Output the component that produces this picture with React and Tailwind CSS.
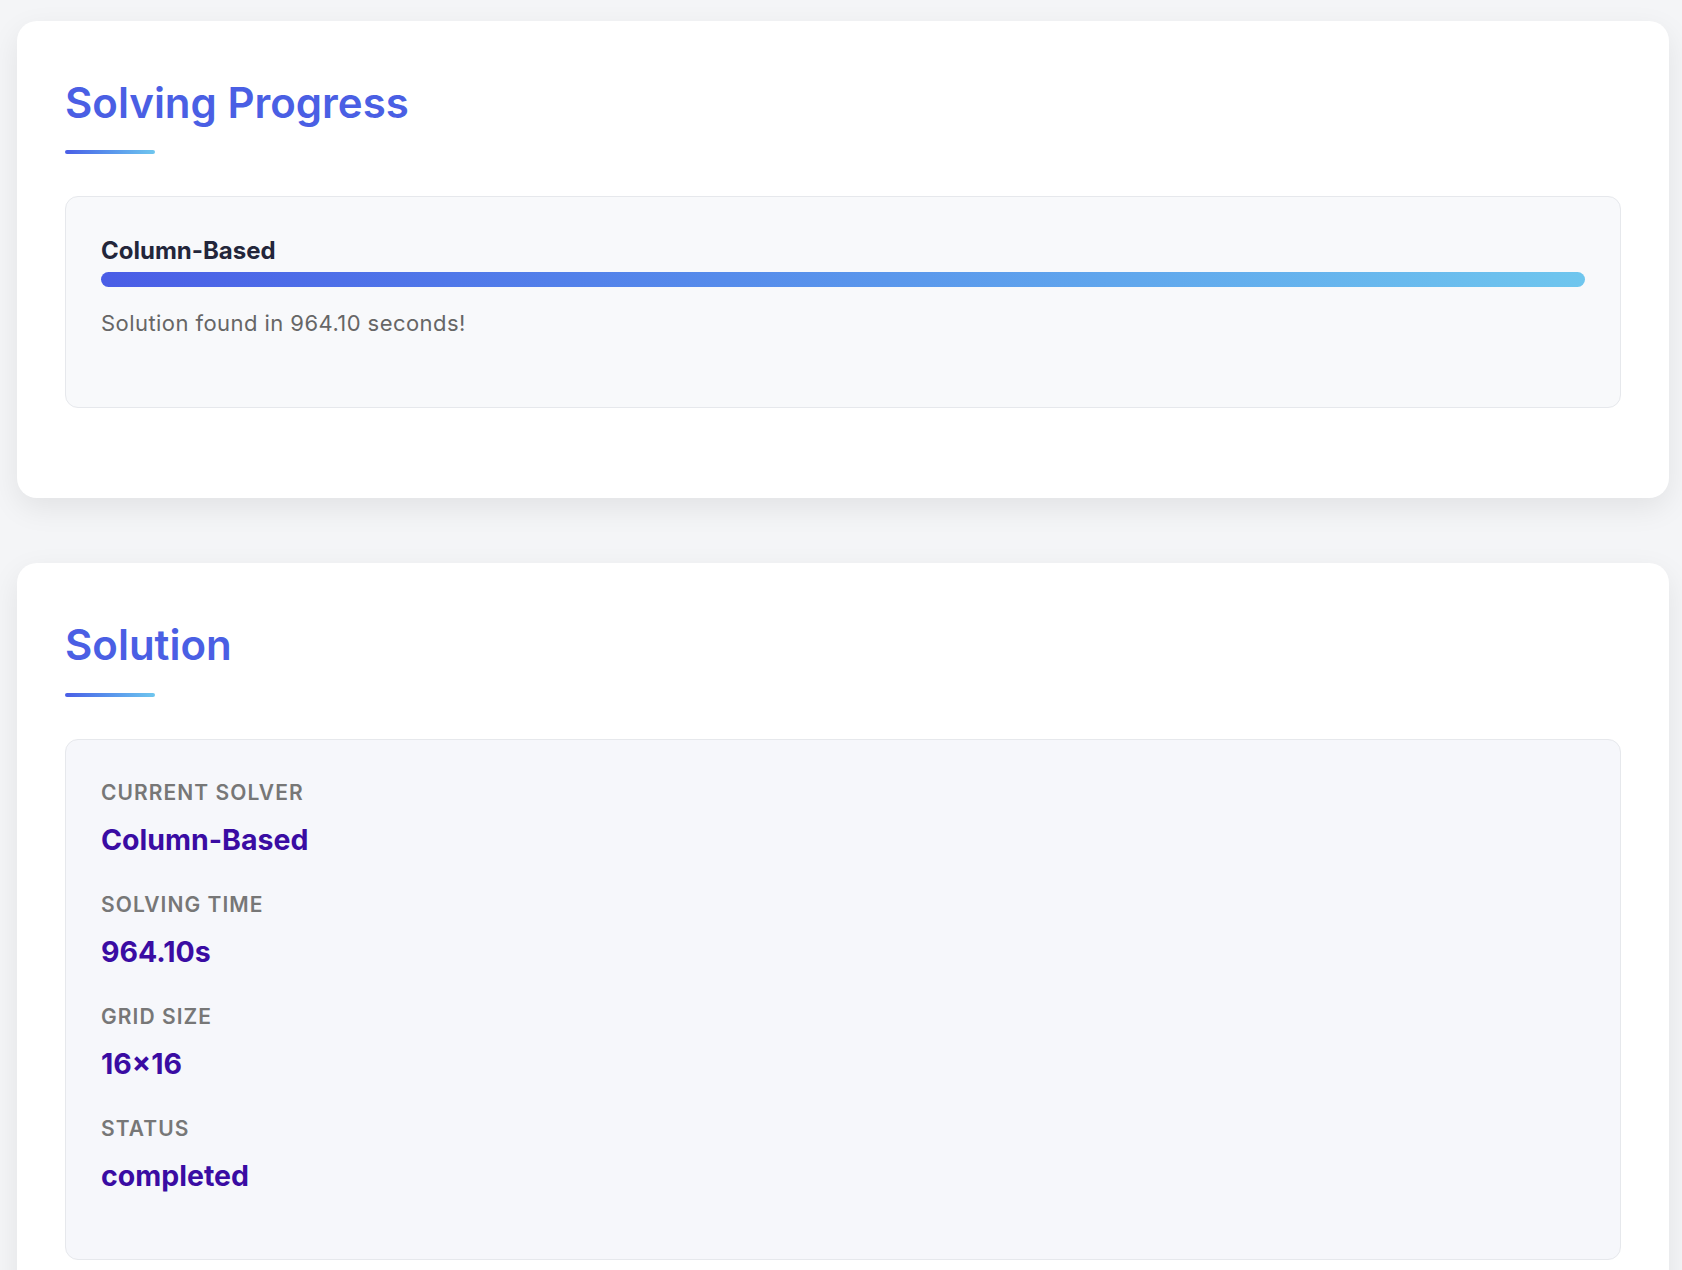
export default function App() {
  const stats = [
    { label: 'Current Solver', value: 'Column-Based' },
    { label: 'Solving Time', value: '964.10s' },
    { label: 'Grid Size', value: '16×16' },
    { label: 'Status', value: 'completed' },
  ];

  return (
    <div className="min-h-screen bg-[#f4f5f7] pt-[21px] font-['Inter',sans-serif]">
      <section className="ml-[17px] w-[1652px] rounded-[20px] bg-white px-[48px] pt-[57px] pb-[90px] shadow-[0_10px_30px_rgba(0,0,0,0.08)]">
        <h2 className="text-[42px] font-semibold leading-[1.2] text-[#4a5fe4]">Solving Progress</h2>
        <div className="mt-[22px] h-[4px] w-[90px] rounded-full bg-gradient-to-r from-[#4a5de6] to-[#6fc6ee]" />
        <div className="mt-[42px] rounded-[13px] border border-[#e6e8ec] bg-[#f8f9fb] px-[35px] pt-[38px] pb-[68px]">
          <div className="text-[24px] font-bold leading-[32px] text-[#23263a]">Column-Based</div>
          <div className="mt-[5px] h-[15px] w-full rounded-full bg-gradient-to-r from-[#4a5de6] to-[#6fc6ee]" />
          <p className="mt-[21px] text-[22px] leading-[31px] tracking-[0.02em] text-[#666666]">Solution found in 964.10 seconds!</p>
        </div>
      </section>

      <section className="mt-[65px] ml-[17px] w-[1652px] rounded-[20px] bg-white px-[48px] pt-[57px] pb-[91px] shadow-[0_10px_30px_rgba(0,0,0,0.08)]">
        <h2 className="text-[42px] font-semibold leading-[1.2] text-[#4a5fe4]">Solution</h2>
        <div className="mt-[22px] h-[4px] w-[90px] rounded-full bg-gradient-to-r from-[#4a5de6] to-[#6fc6ee]" />
        <div className="mt-[42px] rounded-[13px] border border-[#e6e8ec] bg-[#f6f7fb] px-[35px] pt-[39px] pb-[32px]">
          {stats.map((s) => (
            <div key={s.label} className="mb-[33px]">
              <div className="text-[21px] font-semibold uppercase leading-[28px] tracking-[0.05em] text-[#777777]">{s.label}</div>
              <div className="mt-[15px] text-[28.5px] font-bold leading-[36px] text-[#3a0ca3]">{s.value}</div>
            </div>
          ))}
        </div>
      </section>
    </div>
  );
}
